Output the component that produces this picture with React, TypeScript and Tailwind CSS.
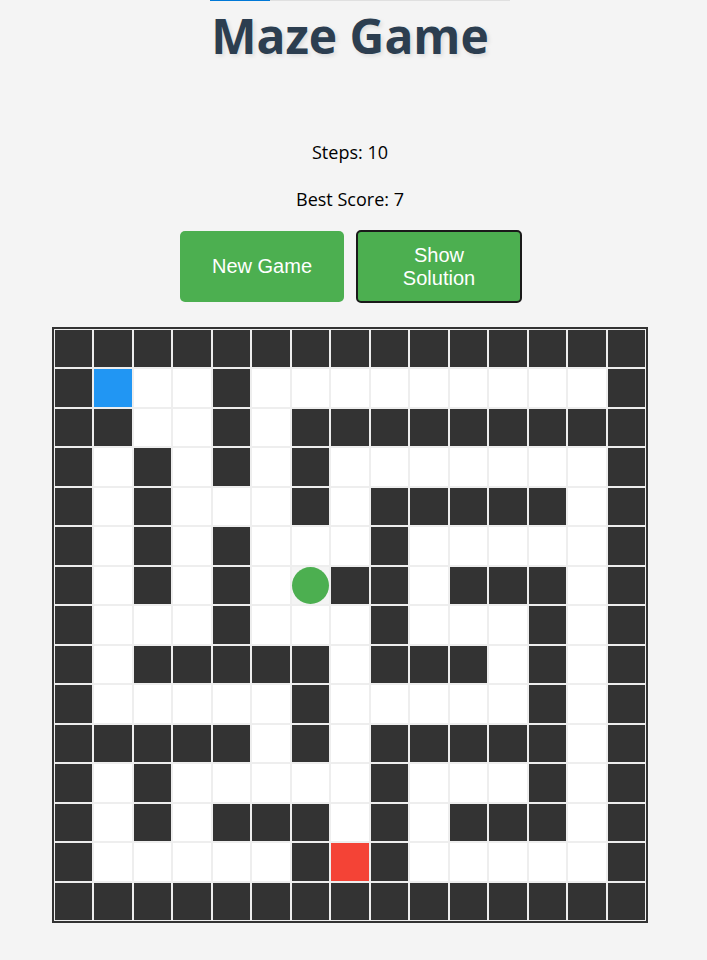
import React from "react";

const MAZE = [
  "WWWWWWWWWWWWWWW",
  "WS..W.........W",
  "WW..W.WWWWWWWWW",
  "W.W.W.W.......W",
  "W.W...W.WWWWW.W",
  "W.W.W...W.....W",
  "W.W.W.PWW.WWW.W",
  "W...W...W...W.W",
  "W.WWWWW.WWW.W.W",
  "W.....W.....W.W",
  "WWWWW.W.WWWWW.W",
  "W.W.....W...W.W",
  "W.W.WWW.W.WWW.W",
  "W.....WEW.....W",
  "WWWWWWWWWWWWWWW",
];

function Cell({ t }: { t: string }) {
  if (t === "W") return <div className="border border-[#eeeeee] bg-[#333333]" />;
  if (t === "S") return <div className="border border-[#eeeeee] bg-[#2196F3]" />;
  if (t === "E") return <div className="border border-[#eeeeee] bg-[#F44336]" />;
  if (t === "P")
    return (
      <div className="border border-[#eeeeee] bg-[#f4f4f4] flex items-center justify-center">
        <div className="w-full h-full rounded-full bg-[#4CAF50]" />
      </div>
    );
  return <div className="border border-[#eeeeee] bg-white" />;
}

export default function App() {
  return (
    <div className="min-h-[960px] bg-[#f4f4f4] w-full">
      <div className="w-[700px] flex flex-col">
        <div className="ml-[210px] w-[300px] h-px bg-[#e0e0e0] flex">
          <div className="w-[60px] h-px bg-[#0078d7]" />
        </div>
        <h1
          className="mt-[6px] h-[58px] leading-[58px] text-center text-[48px] font-bold text-[#2c3e50] [text-shadow:2px_2px_4px_rgba(0,0,0,0.1)]"
          style={{ fontFamily: '"Open Sans", "Noto Sans", sans-serif' }}
        >
          Maze Game
        </h1>
        <div
          className="mt-[74px] text-center text-[18px] leading-[27px] text-black"
          style={{ fontFamily: '"Open Sans", "Noto Sans", sans-serif' }}
        >
          Steps: 10
        </div>
        <div
          className="mt-[20px] text-center text-[18px] leading-[27px] text-black"
          style={{ fontFamily: '"Open Sans", "Noto Sans", sans-serif' }}
        >
          Best Score: 7
        </div>
        <div
          className="mt-[17px] pl-[2px] flex items-center justify-center gap-[12px] text-[20px] leading-[23px] text-white"
          style={{ fontFamily: '"Liberation Sans", Arial, sans-serif' }}
        >
          <button className="w-[164px] h-[71px] rounded-[5px] bg-[#4CAF50] text-white">
            New Game
          </button>
          <button className="w-[166px] h-[73px] rounded-[5px] bg-[#4CAF50] border-2 border-[#1a1a1a] text-white px-[30px]">
            Show Solution
          </button>
        </div>
        <div className="mt-[24px] mx-auto w-[596px] h-[596px] border-2 border-[#333333] grid grid-cols-[repeat(15,1fr)] grid-rows-[repeat(15,1fr)]">
          {MAZE.flatMap((row, r) =>
            row.split("").map((t, c) => <Cell key={`${r}-${c}`} t={t} />)
          )}
        </div>
      </div>
    </div>
  );
}
